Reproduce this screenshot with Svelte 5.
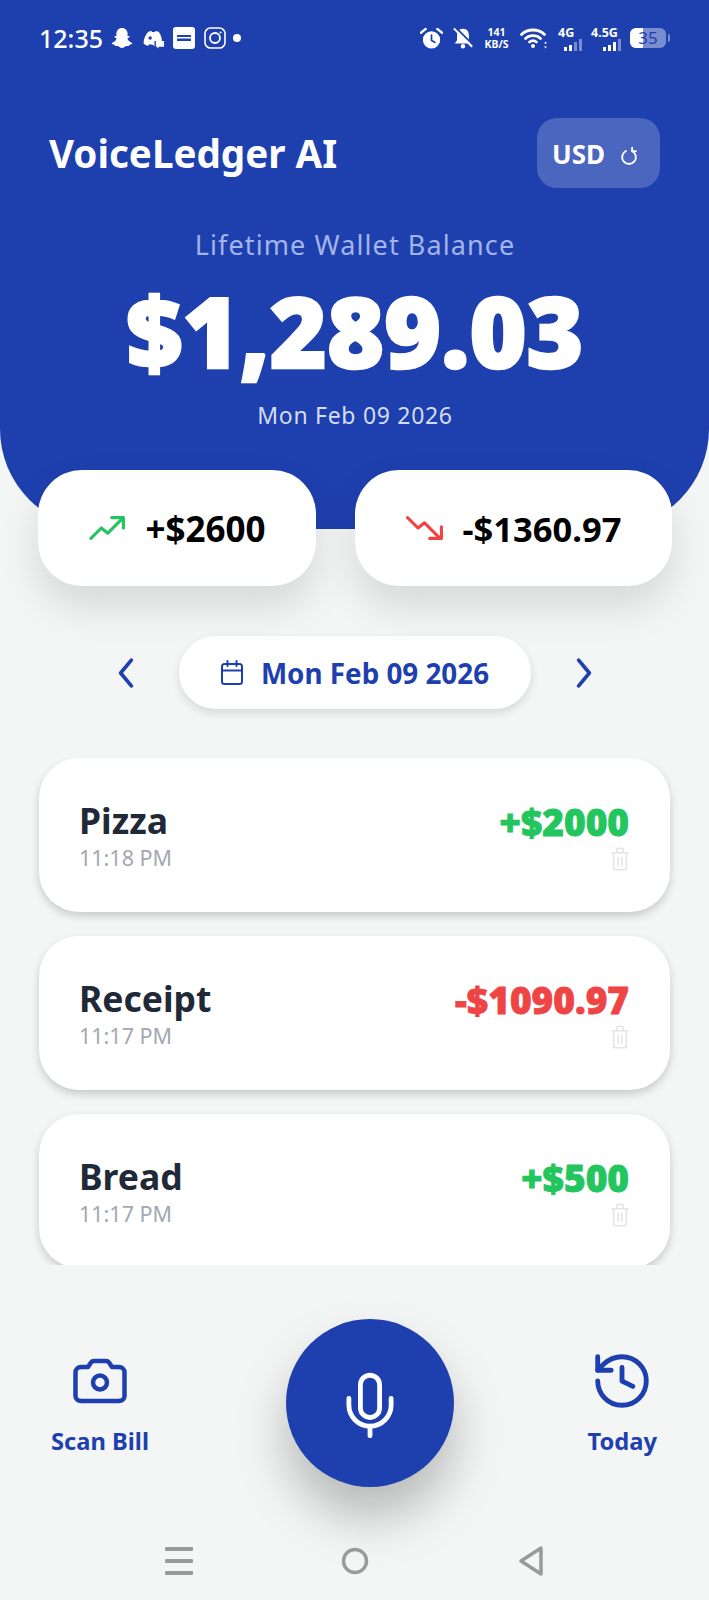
<script>
  const transactions = [
    { name: "Pizza", time: "11:18 PM", amount: "+$2000", kind: "income" },
    { name: "Receipt", time: "11:17 PM", amount: "-$1090.97", kind: "expense" },
    { name: "Bread", time: "11:17 PM", amount: "+$500", kind: "income" },
  ];
</script>

<main class="screen">
  <header class="hero">
    <div class="status">
      <div class="status-left">
        <span class="clock">12:35</span>
        <svg class="s-snap" viewBox="0 0 24 24"><path fill="#fff" d="M12 2c3.400 0 5.600 2.500 5.600 5.600 0 1 0 1.900-.1 2.500.6.200 1.300-.3 1.800 0 .6.400.3 1.100-.3 1.400-.6.300-1.500.5-1.500 1.100 0 1.400 2.300 3.800 4.400 4.300.6.200.5.800 0 1.100-.7.400-1.700.5-2.500.8-.3.500-.1 1.200-.7 1.300-.9.100-2-.2-3 .2-1 .5-1.900 1.600-3.700 1.600s-2.700-1.100-3.700-1.600c-1-.4-2.100-.1-3-.2-.6-.1-.4-.8-.7-1.300-.8-.3-1.800-.4-2.500-.8-.5-.3-.6-.9 0-1.100 2.100-.5 4.400-2.900 4.400-4.300 0-.6-.9-.8-1.500-1.100-.6-.3-.9-1-.3-1.400.5-.3 1.200.2 1.800 0-.1-.6-.1-1.500-.1-2.500C6.400 4.500 8.600 2 12 2z"/></svg>
        <svg class="s-disc" viewBox="0 0 24 24"><path fill="#fff" d="M6.500 5c2-.8 3-.9 3.500-.9l.5 1h3l.5-1c.5 0 1.500.1 3.500.9 2 3 3.200 6.500 3.300 9.500H13v5.300c-.9-.2-1.300-.7-1.500-1.300-1.500 0-2.500 0-4-.4l-.9 1.400c-2-.3-3.700-1.200-5-2.300C1.700 12.500 3.700 8 6.500 5z"/><circle cx="8.500" cy="11.500" r="1.800" fill="#1e40af"/><path fill="#fff" d="M14.500 14.500h8.500v6h-5l-2 2v-2h-1.500z"/></svg>
        <svg class="s-espn" viewBox="0 0 22 22"><rect width="22" height="22" rx="3" fill="#fff"/><rect x="4" y="8" width="14" height="2" fill="#1e40af"/><rect x="4" y="11.500" width="14" height="2.500" fill="#1e40af"/></svg>
        <svg class="s-insta" viewBox="0 0 22 22" fill="none" stroke="#fff"><rect x="1" y="1" width="20" height="20" rx="5.500" stroke-width="1.600"/><circle cx="11" cy="11" r="5" stroke-width="1.800"/><circle cx="16.600" cy="5.400" r="1" fill="#fff" stroke="none"/></svg>
        <span class="dot"></span>
      </div>
      <div class="status-right">
        <svg class="s-alarm" viewBox="0 0 24 24"><circle cx="12" cy="13.500" r="9" fill="#fff"/><path d="M12 8.500v5.500l3.500 2" fill="none" stroke="#1e40af" stroke-width="1.800" stroke-linecap="round"/><path d="M1 6l5-4M23 6l-5-4" stroke="#fff" stroke-width="2.400" stroke-linecap="round"/></svg>
        <svg class="s-bell" viewBox="0 0 24 24"><path fill="#fff" d="M12 2c4.500 0 6.500 3.500 6.500 7.500v5l2.500 3.500H3l2.500-3.500v-5C5.500 5.500 7.500 2 12 2z"/><circle cx="12" cy="21" r="2.400" fill="#fff"/><path d="M3.500 0l20 20" stroke="#1e40af" stroke-width="2"/><path d="M2 1.500l20 20" stroke="#fff" stroke-width="2.200"/></svg>
        <div class="speed"><span>141</span><span>KB/S</span></div>
        <svg class="s-wifi" viewBox="0 0 28 22" fill="none" stroke="#fff" stroke-width="2.800" stroke-linecap="round"><path d="M1.500 7.500c6-6 17-6 23 0"/><path d="M5.500 11.500c4-3.800 11-3.800 15 0"/><path d="M9.500 15c2-1.500 5-1.500 7 0"/><circle cx="13" cy="19" r="2" fill="#fff" stroke="none"/><path d="M25.500 14.500l-1.500 2h3zM25.500 21.500l-1.500-2h3z" fill="#fff" stroke="none"/></svg>
        <div class="net net-4g">
          <span class="net-label">4G</span>
          <div class="bars"><i></i><i></i><i class="off"></i><i class="off"></i></div>
        </div>
        <div class="net net-45g">
          <span class="net-label">4.5G</span>
          <div class="bars"><i></i><i></i><i></i><i class="off"></i></div>
        </div>
        <div class="battery">
          <span class="battery-fill"></span>
          <span class="battery-num">35</span>
          <span class="battery-cap"></span>
        </div>
      </div>
    </div>

    <div class="title-row">
      <h1>VoiceLedger AI</h1>
      <button type="button" class="currency">
        USD
        <svg viewBox="0 0 16 16" fill="none" stroke="#fff" stroke-width="1.500" stroke-linecap="round" stroke-linejoin="round"><path d="M5.500 4a5.500 5.500 0 1 0 5 0"/><path d="M10.500 1.300V4.200h3"/></svg>
      </button>
    </div>

    <div class="balance">
      <div class="balance-label">Lifetime Wallet Balance</div>
      <div class="balance-value">$1,289.03</div>
      <div class="balance-date">Mon Feb 09 2026</div>
    </div>
  </header>

  <section class="totals">
    <div class="total total-in">
      <svg viewBox="0 0 28 20" fill="none" stroke="#22c55e" stroke-width="2.400" stroke-linecap="round" stroke-linejoin="round"><path d="M2 18l8-8 5 4 11-11"/><path d="M18 2h9v8"/></svg>
      <span>+$2600</span>
    </div>
    <div class="total total-out">
      <svg viewBox="0 0 28 20" fill="none" stroke="#ef4444" stroke-width="2.400" stroke-linecap="round" stroke-linejoin="round"><path d="M1 2l8 8 5-4 12 12"/><path d="M27 9v9h-9"/></svg>
      <span>-$1360.97</span>
    </div>
  </section>

  <nav class="date-nav">
    <svg class="chev" viewBox="0 0 16 28" fill="none" stroke="#1e40af" stroke-width="3.400" stroke-linecap="round" stroke-linejoin="round"><path d="M13 2L3 14l10 12"/></svg>
    <div class="date-pill">
      <svg viewBox="0 0 24 26" fill="none" stroke="#1e40af" stroke-width="2" stroke-linecap="round" stroke-linejoin="round"><rect x="2" y="4" width="20" height="20" rx="2.500"/><path d="M2 10.500h20M7.500 1v5M16.500 1v5"/></svg>
      <span>Mon Feb 09 2026</span>
    </div>
    <svg class="chev" viewBox="0 0 16 28" fill="none" stroke="#1e40af" stroke-width="3.400" stroke-linecap="round" stroke-linejoin="round"><path d="M3 2l10 12L3 26"/></svg>
  </nav>

  <section class="list">
    {#each transactions as tx}
      <article class="card">
        <div class="tx-left">
          <div class="tx-name">{tx.name}</div>
          <div class="tx-time">{tx.time}</div>
        </div>
        <div class="tx-right">
          <div class="tx-amount {tx.kind}">{tx.amount}</div>
          <svg class="trash" viewBox="0 0 20 26" fill="none" stroke="#e2e4e8" stroke-width="1.800" stroke-linecap="round" stroke-linejoin="round"><path d="M1 6h18M6.500 6V2.500a1.500 1.500 0 0 1 1.500-1.500h4a1.500 1.500 0 0 1 1.500 1.500V6M3 6v17a2 2 0 0 0 2 2h10a2 2 0 0 0 2-2V6M8 11v9M12 11v9"/></svg>
        </div>
      </article>
    {/each}
  </section>

  <footer class="actions">
    <div class="action">
      <div class="action-icon">
        <svg class="camera" viewBox="0 0 54 46" fill="none" stroke="#1e40af" stroke-width="4.500" stroke-linecap="round" stroke-linejoin="round"><path d="M8 9h7l3-4.500c.7-1 1.700-1.500 3-1.500h12c1.300 0 2.300.5 3 1.500L39 9h7c3 0 5.500 2.500 5.500 5.500V38c0 3-2.500 5-5.500 5H8c-3 0-5.500-2-5.500-5V14.500C2.500 11.500 5 9 8 9z"/><circle cx="27" cy="24.500" r="7"/></svg>
      </div>
      <span>Scan Bill</span>
    </div>
    <button type="button" class="mic" aria-label="Record">
      <svg viewBox="0 0 50 68" fill="none" stroke="#fff" stroke-width="5" stroke-linecap="round" stroke-linejoin="round"><rect x="15" y="3" width="20" height="44" rx="10"/><path d="M3 27v7a22 22 0 0 0 44 0v-7"/><path d="M25 56v10"/></svg>
    </button>
    <div class="action">
      <div class="action-icon">
        <svg class="history" viewBox="2 2 20 20" fill="none" stroke="#1e40af" stroke-width="1.800" stroke-linecap="round" stroke-linejoin="round"><path d="M3 12a9 9 0 1 0 9-9 9.750 9.750 0 0 0-6.740 2.740L3 8"/><path d="M3 3v5h5"/><path d="M12 7v5l4 2"/></svg>
      </div>
      <span>Today</span>
    </div>
  </footer>

  <div class="sys-nav">
    <svg viewBox="0 0 28 30" fill="#9a9a9a"><rect width="28" height="4" y="1" rx="1"/><rect width="28" height="4" y="13" rx="1"/><rect width="28" height="4" y="25" rx="1"/></svg>
    <svg viewBox="0 0 28 30" fill="none" stroke="#9a9a9a" stroke-width="3.500"><circle cx="14" cy="15" r="11.500"/></svg>
    <svg viewBox="0 0 28 30" fill="none" stroke="#9a9a9a" stroke-width="3.500" stroke-linejoin="round"><path d="M24 2v26L4 15z"/></svg>
  </div>
</main>

<style>
  :global(body) {
    background: #f4f6f6;
  }

  .screen {
    width: 709px;
    height: 1600px;
    overflow: hidden;
    background: #f4f6f6;
    font-family: "Noto Sans", "Liberation Sans", sans-serif;
  }

  .hero {
    height: 529px;
    box-sizing: border-box;
    padding: 22px 38px 0 39px;
    background: #1e40af;
    border-radius: 0 0 100px 100px;
    color: #fff;
  }

  .status {
    display: flex;
    justify-content: space-between;
    align-items: center;
    height: 32px;
    padding-right: 1px;
  }
  .status-left,
  .status-right {
    display: flex;
    align-items: center;
  }
  .clock {
    font-size: 25px;
    font-weight: 500;
    margin-right: 7px;
  }
  .s-snap { width: 24px; height: 24px; margin-right: 8px; }
  .s-disc { width: 23px; height: 23px; margin-right: 8px; }
  .s-espn { width: 22px; height: 22px; margin-right: 9px; }
  .s-insta { width: 22px; height: 22px; margin-right: 7px; }
  .dot { width: 8px; height: 8px; border-radius: 50%; background: #fff; }

  .s-alarm { width: 23px; height: 23px; margin-right: 9px; }
  .s-bell { width: 22px; height: 22px; margin-right: 9px; }
  .speed {
    display: flex;
    flex-direction: column;
    align-items: center;
    width: 27px;
    margin-right: 10px;
    font-size: 10.500px;
    font-weight: 700;
    line-height: 12px;
  }
  .s-wifi { width: 28px; height: 22px; margin-right: 10px; }
  .net {
    display: flex;
    flex-direction: column;
    align-items: flex-end;
    margin-right: 9px;
  }
  .net-4g { width: 24px; }
  .net-45g { width: 30px; }
  .net-label {
    align-self: flex-start;
    font-size: 12.500px;
    font-weight: 700;
    line-height: 13px;
  }
  .bars {
    display: flex;
    align-items: flex-end;
    gap: 2px;
    height: 12px;
  }
  .bars i {
    width: 3px;
    background: #fff;
  }
  .bars i:nth-child(1) { height: 4px; }
  .bars i:nth-child(2) { height: 6px; }
  .bars i:nth-child(3) { height: 9px; }
  .bars i:nth-child(4) { height: 12px; }
  .bars i.off { background: rgba(255, 255, 255, 0.4); }

  .battery {
    position: relative;
    width: 36px;
    height: 20px;
    margin-right: 4px;
    border-radius: 6px;
    background: rgba(255, 255, 255, 0.4);
  }
  .battery-fill {
    position: absolute;
    left: 0;
    top: 0;
    bottom: 0;
    width: 13px;
    background: #fff;
    border-radius: 6px 0 0 6px;
  }
  .battery-num {
    position: absolute;
    inset: 0;
    text-align: center;
    font-size: 17px;
    line-height: 20px;
    color: #1e40af;
  }
  .battery-cap {
    position: absolute;
    right: -4px;
    top: 6px;
    width: 2px;
    height: 8px;
    border-radius: 0 2px 2px 0;
    background: rgba(255, 255, 255, 0.4);
  }

  .title-row {
    display: flex;
    justify-content: space-between;
    align-items: center;
    margin-top: 64px;
    padding: 0 11px 0 10px;
  }
  h1 {
    margin: 0;
    font-size: 38.600px;
    font-weight: 700;
    line-height: 70px;
  }
  .currency {
    display: flex;
    align-items: center;
    justify-content: center;
    gap: 14px;
    width: 123px;
    height: 70px;
    padding: 2px 6px 0 0;
    border: 0;
    border-radius: 20px;
    background: rgba(255, 255, 255, 0.2);
    color: #fff;
    font: 700 26px "Noto Sans", sans-serif;
  }
  .currency svg {
    width: 20px;
    height: 20px;
    margin-top: 3px;
  }

  .balance {
    text-align: center;
  }
  .balance-label {
    margin-top: 37px;
    font-size: 27px;
    line-height: 40px;
    letter-spacing: 1.100px;
    color: #a3b4e8;
  }
  .balance-value {
    margin-top: 14px;
    font-size: 97.500px;
    font-weight: 900;
    line-height: 104px;
    -webkit-text-stroke: 2.500px #fff;
  }
  .balance-date {
    margin-top: 16px;
    font-size: 23px;
    line-height: 32px;
    letter-spacing: 0.700px;
    color: #d5dcf3;
  }

  .totals {
    position: relative;
    display: flex;
    gap: 39px;
    margin-top: -59px;
    padding: 0 37px 0 38px;
  }
  .total {
    display: flex;
    align-items: center;
    justify-content: center;
    gap: 20px;
    height: 116px;
    border-radius: 44px;
    background: #fff;
    box-shadow: 0 20px 40px rgba(0, 0, 0, 0.12);
    font-weight: 700;
    color: #000;
  }
  .total-in { width: 278px; font-size: 35px; }
  .total-out { width: 317px; font-size: 34.500px; }
  .total svg {
    width: 37px;
    height: 26px;
  }

  .date-nav {
    display: flex;
    justify-content: center;
    align-items: center;
    gap: 44px;
    margin-top: 50px;
  }
  .chev {
    width: 18px;
    height: 30px;
  }
  .date-pill {
    display: flex;
    align-items: center;
    justify-content: center;
    gap: 17px;
    width: 352px;
    height: 73px;
    border-radius: 37px;
    background: #fff;
    box-shadow: 0 4px 10px rgba(0, 0, 0, 0.12);
    font-size: 27.800px;
    font-weight: 700;
    color: #1e40af;
  }
  .date-pill svg {
    width: 24px;
    height: 26px;
  }

  .list {
    display: flex;
    flex-direction: column;
    gap: 24px;
    height: 507px;
    box-sizing: border-box;
    margin-top: 49px;
    overflow: hidden;
    padding: 0 39px;
  }
  .card {
    display: flex;
    justify-content: space-between;
    align-items: center;
    flex: 0 0 auto;
    height: 154px;
    box-sizing: border-box;
    padding: 0 41px 0 40px;
    border-radius: 40px;
    background: #fff;
    box-shadow: 0 4px 8px rgba(0, 0, 0, 0.18);
  }
  .tx-left {
    padding-top: 3px;
  }
  .tx-name {
    font-size: 35.500px;
    font-weight: 700;
    line-height: 38px;
    color: #1f2937;
  }
  .tx-time {
    margin-top: 5px;
    font-size: 21.500px;
    line-height: 28px;
    color: #a3a8b2;
  }
  .tx-right {
    display: flex;
    flex-direction: column;
    align-items: flex-end;
    padding-top: 2px;
  }
  .tx-amount {
    font-size: 37px;
    font-weight: 900;
    line-height: 40px;
    -webkit-text-stroke: 0.800px currentColor;
  }
  .income { color: #22c55e; }
  .expense { color: #ef4444; }
  .trash {
    width: 18px;
    height: 24px;
    margin-top: 5px;
  }

  .actions {
    display: flex;
    justify-content: space-between;
    align-items: flex-start;
    margin-top: 54px;
    padding: 0 52px 0 51px;
  }
  .action {
    display: flex;
    flex-direction: column;
    align-items: center;
    gap: 17px;
    margin-top: 35px;
    font-size: 23.700px;
    font-weight: 700;
    line-height: 32px;
    color: #1e40af;
  }
  .action-icon {
    display: flex;
    align-items: center;
    justify-content: center;
    height: 54px;
  }
  .camera {
    width: 54px;
    height: 46px;
  }
  .history {
    width: 54px;
    height: 54px;
  }
  .mic {
    width: 168px;
    height: 168px;
    flex: none;
    margin-left: 4px;
    border: 0;
    padding: 0;
    border-radius: 50%;
    background: #1e40af;
    box-shadow: 0 30px 50px rgba(0, 0, 0, 0.25);
  }
  .mic svg {
    display: block;
    width: 48px;
    height: 66px;
    margin: 3px auto 0;
  }

  .sys-nav {
    display: flex;
    justify-content: center;
    gap: 148px;
    margin-top: 59px;
  }
  .sys-nav svg {
    width: 28px;
    height: 30px;
  }
</style>
